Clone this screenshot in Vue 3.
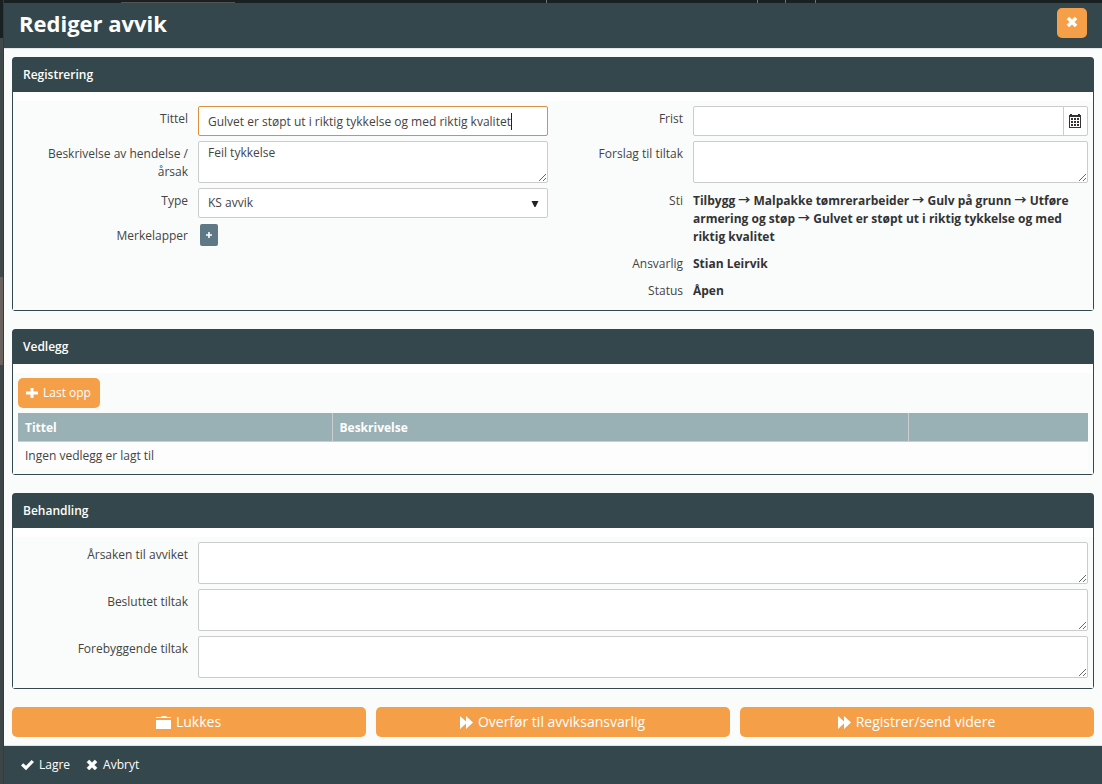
<script setup>
import { ref } from 'vue'

const title = ref('Gulvet er støpt ut i riktig tykkelse og med riktig kvalitet')
const description = ref('Feil tykkelse')
const type = ref('KS avvik')
const deadline = ref('')
const suggestion = ref('')
const treatment = ref([
  { id: 'cause', label: 'Årsaken til avviket', value: '' },
  { id: 'decided', label: 'Besluttet tiltak', value: '' },
  { id: 'preventive', label: 'Forebyggende tiltak', value: '' }
])
const path = 'Tilbygg → Malpakke tømrerarbeider → Gulv på grunn → Utføre armering og støp → Gulvet er støpt ut i riktig tykkelse og med riktig kvalitet'
</script>

<template>
  <div class="page">
    <div class="backdrop-top"><i class="tab"></i><i class="tick t1"></i><i class="tick t2"></i><i class="tick t3"></i><i class="tick t4"></i></div>
    <div class="backdrop-side"></div>
    <div class="modal" role="dialog" aria-labelledby="dialog-title">
      <header class="modal-head">
        <h1 id="dialog-title">Rediger avvik</h1>
        <button class="orange close" type="button" aria-label="Lukk">
          <svg width="12" height="12" viewBox="0 0 12 12"><path d="M3.2 1 6 3.8 8.8 1 11 3.2 8.2 6 11 8.8 8.8 11 6 8.2 3.2 11 1 8.8 3.8 6 1 3.2Z" fill="#fff" stroke="#fff" stroke-width=".6" stroke-linejoin="round" /></svg>
        </button>
      </header>

      <main class="modal-body">
        <section class="panel">
          <h2>Registrering</h2>
          <div class="panel-body columns">
            <div class="fields left">
              <label for="title">Tittel</label>
              <div class="caret-box">
                <input id="title" v-model="title" class="control active" type="text" />
                <i class="caret"></i>
              </div>
              <label for="description">Beskrivelse av hendelse / årsak</label>
              <textarea id="description" v-model="description" class="control"></textarea>
              <label for="type">Type</label>
              <div class="select-box">
                <select id="type" v-model="type" class="control">
                  <option>KS avvik</option>
                </select>
                <svg class="arrow" width="8" height="6" viewBox="0 0 8 6"><path d="M.5 0H7.5L4.5 6H3.5Z" fill="#222" /></svg>
              </div>
              <label for="tags">Merkelapper</label>
              <button id="tags" class="tag-add" type="button" aria-label="Legg til merkelapp">
                <svg width="8" height="8" viewBox="0 0 8 8"><path d="M3.2 1H4.8V3.2H7V4.8H4.8V7H3.2V4.8H1V3.2H3.2Z" fill="#fff" /></svg>
              </button>
            </div>
            <div class="fields right">
              <label for="deadline">Frist</label>
              <div class="date-box">
                <input id="deadline" v-model="deadline" type="text" />
                <button type="button" aria-label="Velg dato">
                  <svg width="12" height="14" viewBox="0 0 12 14" shape-rendering="crispEdges"><path d="M1 0H3V1H9V0H11V1H12V14H0V1H1ZM1 3V13H11V3Z" fill="#333" fill-rule="evenodd" /><path d="M2 4h2v2H2zM5 4h2v2H5zM8 4h2v2H8zM2 7h2v2H2zM5 7h2v2H5zM8 7h2v2H8zM2 10h2v2H2zM5 10h2v2H5zM8 10h2v2H8z" fill="#333" /></svg>
                </button>
              </div>
              <label for="suggestion">Forslag til tiltak</label>
              <textarea id="suggestion" v-model="suggestion" class="control"></textarea>
              <span class="label">Sti</span>
              <strong class="value">{{ path }}</strong>
              <span class="label">Ansvarlig</span>
              <strong class="value">Stian Leirvik</strong>
              <span class="label">Status</span>
              <strong class="value">Åpen</strong>
            </div>
          </div>
        </section>

        <section class="panel">
          <h2>Vedlegg</h2>
          <div class="panel-body attachments">
            <button class="orange upload" type="button">
              <svg width="12" height="12" viewBox="0 0 12 12"><path d="M4.5 1H7.5V4.5H12V7.5H7.5V11H4.5V7.5H0V4.5H4.5Z" fill="#fff" /></svg>
              Last opp
            </button>
            <table>
              <thead>
                <tr><th class="c1">Tittel</th><th class="c2">Beskrivelse</th><th></th></tr>
              </thead>
              <tbody>
                <tr><td colspan="3">Ingen vedlegg er lagt til</td></tr>
              </tbody>
            </table>
          </div>
        </section>

        <section class="panel">
          <h2>Behandling</h2>
          <div class="panel-body">
            <div class="fields left">
              <template v-for="field in treatment" :key="field.id">
                <label :for="field.id">{{ field.label }}</label>
                <textarea :id="field.id" v-model="field.value" class="control"></textarea>
              </template>
            </div>
          </div>
        </section>

        <div class="actions">
          <button class="orange" type="button">
            <svg width="15" height="13" viewBox="0 0 15 13"><path d="M0 2V1H5L6 0H10L11 1H15V2ZM0 4H15V13H0Z" fill="#fff" /></svg>
            Lukkes
          </button>
          <button class="orange" type="button">
            <svg width="13" height="13" viewBox="0 0 13 13"><path d="M0 0 6 5.5V0L13 6.5 6 13V7.5L0 13Z" fill="#fff" /></svg>
            Overfør til avviksansvarlig
          </button>
          <button class="orange" type="button">
            <svg width="13" height="13" viewBox="0 0 13 13"><path d="M0 0 6 5.5V0L13 6.5 6 13V7.5L0 13Z" fill="#fff" /></svg>
            Registrer/send videre
          </button>
        </div>
      </main>

      <footer>
        <button type="button">
          <svg width="13" height="12" viewBox="0 0 13 12"><path d="M0 6.5 2.2 4.3 5 6.8 10.6 1 13 3.1 5 11.2Z" fill="#fff" /></svg>
          Lagre
        </button>
        <button type="button">
          <svg width="12" height="12" viewBox="0 0 12 12"><path d="M3.2 1 6 3.8 8.8 1 11 3.2 8.2 6 11 8.8 8.8 11 6 8.2 3.2 11 1 8.8 3.8 6 1 3.2Z" fill="#fff" stroke="#fff" stroke-width=".6" stroke-linejoin="round" /></svg>
          Avbryt
        </button>
      </footer>
    </div>
  </div>
</template>

<style>
body {
  margin: 0;
  background: #414749;
}
</style>

<style scoped>
* {
  box-sizing: border-box;
}
.page {
  position: relative;
  min-height: 100vh;
  padding: 3px 0 0 4px;
  display: flex;
  font: 12px/18px "Open Sans", "Noto Sans CJK JP", sans-serif;
  color: #444;
}
button, input, select, textarea {
  font: inherit;
  color: inherit;
  margin: 0;
}
button {
  border: 0;
  background: none;
  padding: 0;
  cursor: pointer;
}
svg {
  display: block;
  flex: none;
}
.backdrop-top {
  position: absolute;
  inset: 0 0 auto 0;
  height: 3px;
  background: #182022;
}
.backdrop-top i {
  position: absolute;
  top: 0;
  width: 1px;
  height: 3px;
  background: #6c7476;
}
.backdrop-top .tab { left: 11%; width: 114px; top: 2px; height: 1px; background: #55534f; }
.t1 { left: 546px; }
.t2 { left: 757px; }
.t3 { left: 785px; }
.t4 { left: 815px; }
.backdrop-side {
  position: absolute;
  inset: 0 auto 0 0;
  width: 4px;
  background: linear-gradient(#182022 38px, #40484a 38px 277px, #6a625e 277px 365px, #3e4547 365px);
  border-right: 1px solid #343b3d;
}
.modal {
  position: relative;
  flex: 1;
  display: flex;
  flex-direction: column;
  background: #fafcfb;
}
.modal-head {
  display: flex;
  align-items: center;
  justify-content: space-between;
  height: 46px;
  padding: 0 15px 5px;
  background: #34474c;
  border-bottom: 1px solid #e5e5e5;
}
h1 {
  margin: 0;
  font-size: 22px;
  line-height: 30px;
  font-weight: 700;
  color: #fff;
}
.orange {
  display: flex;
  align-items: center;
  justify-content: center;
  height: 30px;
  border-radius: 5px;
  background: #f5a048;
  color: #fff;
}
.close {
  width: 30px;
  padding-bottom: 2px;
}
.modal-body {
  flex: 1;
  display: flex;
  flex-direction: column;
  gap: 18px;
  padding: 8px;
}
.panel {
  border: 1px solid #34474c;
  border-radius: 3px;
  background: #fff;
}
h2 {
  margin: 0 0 9px;
  padding: 8px 10px;
  font-size: 12px;
  line-height: 18px;
  font-weight: 600;
  color: #fff;
  background: #34474c;
}
.panel-body {
  padding: 5px 5px 10px;
  background: #fafcfb;
}
.columns {
  display: grid;
  grid-template-columns: 1fr 1fr;
  gap: 10px;
}
.fields {
  display: grid;
  gap: 5px 10px;
  align-content: start;
}
.left {
  grid-template-columns: 170px 1fr;
}
.right {
  grid-template-columns: 125px 1fr;
}
label, .label {
  padding-top: 4px;
  text-align: right;
}
.value {
  padding-top: 4px;
  font-weight: 700;
  color: #333;
}
.control {
  display: block;
  width: 100%;
  height: 30px;
  padding: 1px 9px 0;
  border: 1px solid #ccc;
  border-radius: 2px;
  background: #fff;
  outline: 0;
}
textarea.control {
  height: 42px;
  padding-top: 2px;
  resize: both;
}
.control.active {
  border-color: #dd8f3d;
}
.caret-box, .select-box {
  position: relative;
}
.caret {
  position: absolute;
  top: 7px;
  left: 313px;
  width: 1px;
  height: 17px;
  background: #222;
}
select.control {
  appearance: none;
  padding: 0 9px 1px;
}
.arrow {
  position: absolute;
  right: 9px;
  top: 13px;
  pointer-events: none;
}
.tag-add {
  display: flex;
  align-items: center;
  justify-content: center;
  width: 18px;
  height: 22px;
  margin: 1px 2px 0;
  border-radius: 2px;
  background: #5e7888;
}
.date-box {
  display: flex;
  height: 30px;
  border: 1px solid #ccc;
  border-radius: 2px;
  background: #fff;
}
.date-box input {
  flex: 1;
  min-width: 0;
  border: 0;
  padding: 0 9px;
  background: none;
  outline: 0;
}
.date-box button {
  width: 24px;
  padding-left: 5px;
  border-left: 1px solid #ccc;
}
.attachments {
  padding-bottom: 4px;
}
.upload {
  gap: 5px;
  padding: 0 9px 0 8px;
  margin-bottom: 5px;
}
table {
  width: 100%;
  table-layout: fixed;
  border-collapse: separate;
  border-spacing: 0;
}
th, td {
  padding: 5px 7px;
  text-align: left;
}
th {
  padding: 6px 7px 4px;
  font-weight: 700;
  color: #fff;
  background: #99b1b5;
  border-bottom: 1px solid #ccc;
}
th + th {
  border-left: 1px solid #ccc;
}
.c1 { width: 29.3%; }
.c2 { width: 53.9%; }
td {
  background: #fdfdfd;
}
.actions {
  display: grid;
  grid-template-columns: repeat(3, 1fr);
  gap: 10px;
}
.actions .orange {
  gap: 5px;
  padding-right: 1px;
  font-size: 14px;
  line-height: 20px;
}
footer {
  display: flex;
  gap: 16px;
  height: 39px;
  padding: 0 17px;
  background: #34474c;
  border-top: 1px solid #dde3e1;
}
footer button {
  display: flex;
  align-items: center;
  gap: 5px;
  color: #fff;
}
</style>
